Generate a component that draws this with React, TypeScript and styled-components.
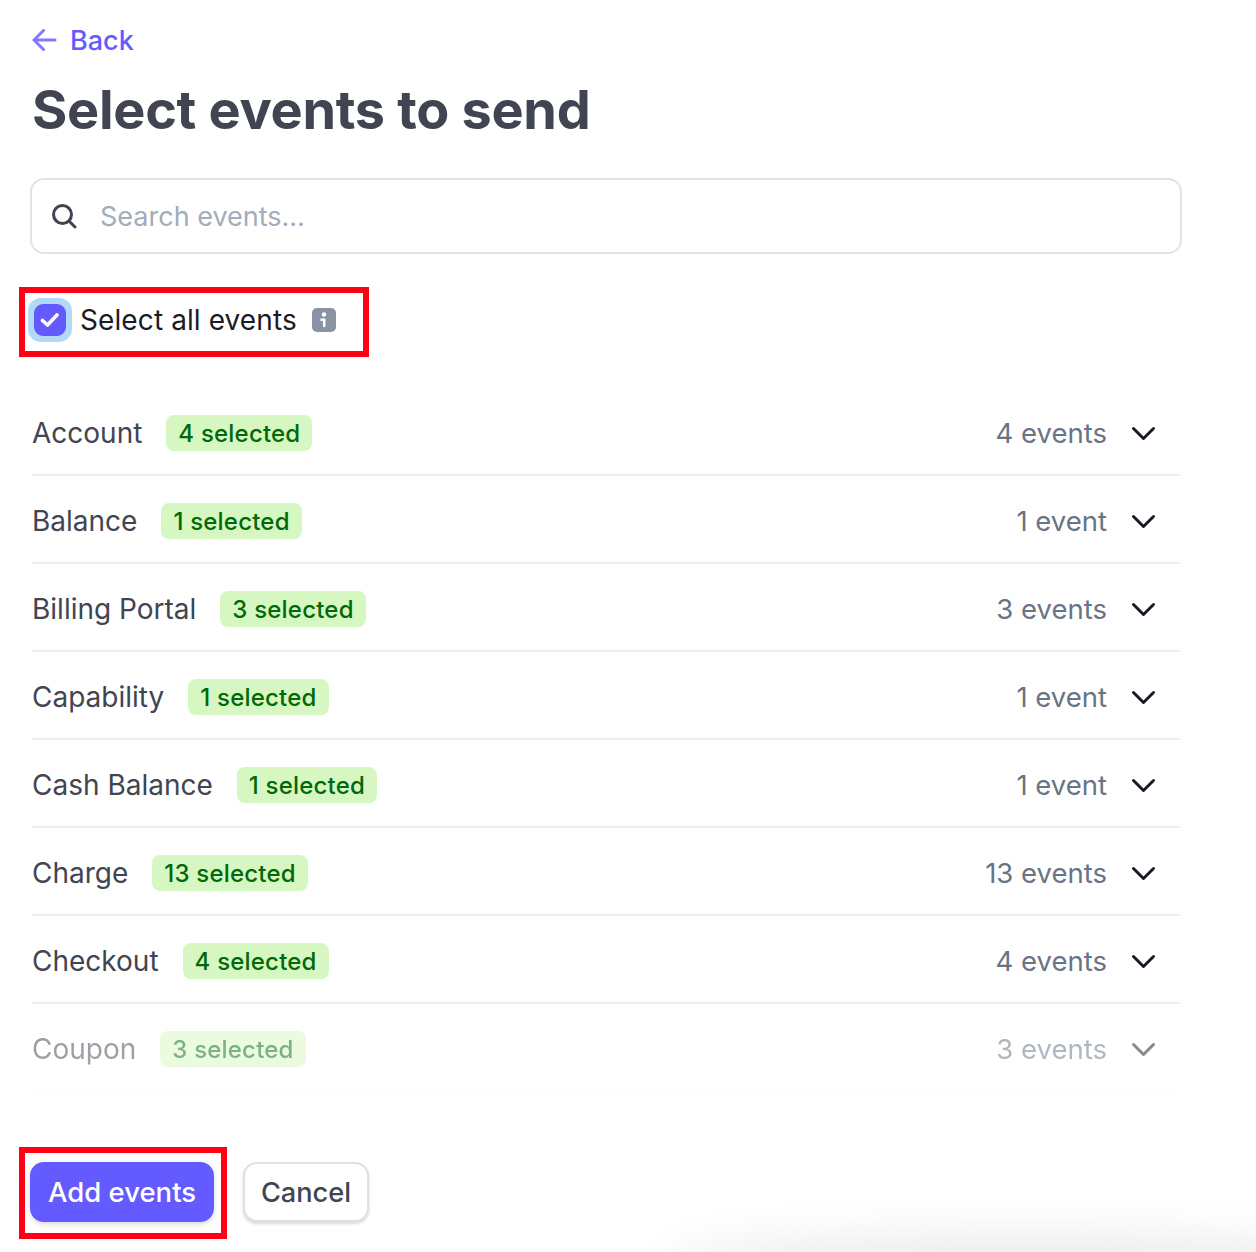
import styled, { createGlobalStyle } from "styled-components";

const GlobalStyle = createGlobalStyle`
  html, body {
    margin: 0;
    padding: 0;
    background: #fff;
  }
  * {
    box-sizing: border-box;
  }
`;

const StyledPage = styled.main`
  position: relative;
  width: 1256px;
  height: 1252px;
  overflow: hidden;
  padding: 20px 75px 0 32px;
  font-family: Inter, "Noto Sans", sans-serif;
  color: #414552;

  &::after {
    content: "";
    position: absolute;
    left: 680px;
    right: -120px;
    bottom: -30px;
    height: 30px;
    border-radius: 50%;
    box-shadow: 0 0 50px 14px rgba(0, 0, 0, 0.09);
  }
`;

const StyledBackLink = styled.a`
  display: flex;
  align-items: center;
  gap: 13px;
  height: 40px;
  font-size: 27px;
  font-weight: 500;
  color: #635bff;
`;

const StyledTitle = styled.h1`
  margin: 15px 0 0;
  font-size: 54px;
  line-height: 70px;
  font-weight: 700;
  letter-spacing: -0.3px;
  color: #414552;
`;

const StyledSearch = styled.div`
  display: flex;
  align-items: center;
  gap: 23px;
  height: 76px;
  margin: 33px 0 0 -2px;
  width: 1152px;
  padding-left: 19px;
  border: 2px solid #e3e3e6;
  border-radius: 14px;
  font-size: 27px;
  color: #a3acba;
`;

const StyledMarked = styled.div`
  position: relative;

  &::after {
    content: "";
    position: absolute;
    border: 6px solid #ff0015;
    pointer-events: none;
  }
`;

const StyledSelectAll = styled(StyledMarked)`
  display: inline-flex;
  align-items: center;
  gap: 8px;
  height: 44px;
  margin: 44px 0 0 -4px;
  font-size: 28px;
  letter-spacing: 0.1px;
  color: #1a1b25;

  &::after {
    inset: -11px -33px -15px -9px;
  }
`;

const StyledCheckbox = styled.span`
  display: flex;
  align-items: center;
  justify-content: center;
  width: 44px;
  height: 44px;
  border-radius: 13px;
  background: #b3d9f9;
`;

const StyledCheckboxFace = styled.span`
  display: flex;
  align-items: center;
  justify-content: center;
  width: 32px;
  height: 32px;
  border-radius: 9px;
  background: #635bff;
`;

const StyledInfo = styled.svg`
  margin-left: 7px;
`;

const StyledList = styled.ul`
  list-style: none;
  width: 1148px;
  margin: 46px 0 0;
  padding: 0;
`;

const StyledRow = styled.li<{ $faded?: boolean }>`
  display: flex;
  align-items: center;
  height: 88px;
  padding: 4px 25px 0 0;
  border-bottom: 2px solid #eeedf3;
  ${({ $faded }) =>
    $faded
      ? "mask-image: linear-gradient(rgba(0,0,0,0.55), rgba(0,0,0,0.5) 70%, rgba(0,0,0,0.1));"
      : ""}
`;

const StyledRowName = styled.span`
  font-size: 28px;
  color: #414552;
`;

const StyledBadge = styled.span`
  display: flex;
  align-items: center;
  height: 36px;
  margin-left: 24px;
  padding: 0 12px;
  border-radius: 8px;
  background: #d7f7c2;
  color: #006908;
  font-size: 24px;
  font-weight: 500;
  letter-spacing: 0.2px;
`;

const StyledCount = styled.span`
  margin-left: auto;
  margin-right: 25px;
  font-size: 27.5px;
  color: #687385;
`;

const StyledActions = styled.div`
  display: flex;
  align-items: center;
  gap: 29px;
  margin-top: 70px;
  margin-left: -2px;
`;

const StyledAddWrap = styled(StyledMarked)`
  &::after {
    inset: -15px -13px -17px -11px;
  }
`;

const StyledPrimaryButton = styled.button`
  display: block;
  width: 184px;
  height: 60px;
  padding: 0;
  border: none;
  border-radius: 14px;
  background: #635bff;
  box-shadow: 0 2px 5px rgba(60, 66, 87, 0.2);
  color: #fff;
  font-family: inherit;
  font-size: 27.5px;
  font-weight: 500;
`;

const StyledSecondaryButton = styled.button`
  width: 126px;
  height: 60px;
  padding: 0;
  border: 2px solid #e0e0e3;
  border-radius: 14px;
  background: #fff;
  box-shadow: 0 2px 3px rgba(60, 66, 87, 0.2);
  color: #414552;
  font-family: inherit;
  font-size: 27.2px;
  font-weight: 500;
`;

const groups = [
  { name: "Account", count: 4 },
  { name: "Balance", count: 1 },
  { name: "Billing Portal", count: 3 },
  { name: "Capability", count: 1 },
  { name: "Cash Balance", count: 1 },
  { name: "Charge", count: 13 },
  { name: "Checkout", count: 4 },
  { name: "Coupon", count: 3 },
];

export default function App() {
  return (
    <StyledPage>
      <GlobalStyle />
      <StyledBackLink>
        <svg width="25" height="26" viewBox="0 0 25 26" fill="none" stroke="#8179fb" strokeWidth="3" strokeLinecap="round" strokeLinejoin="round">
          <path d="M2 13h21M11.5 3.5L2 13l9.5 9.5" />
        </svg>
        Back
      </StyledBackLink>
      <StyledTitle>Select events to send</StyledTitle>

      <StyledSearch>
        <svg width="26" height="26" viewBox="0 0 26 26" fill="none" stroke="#414552" strokeWidth="3" strokeLinecap="round">
          <circle cx="11.5" cy="11.5" r="9" />
          <path d="M18.5 18.5L24 24" />
        </svg>
        Search events...
      </StyledSearch>

      <StyledSelectAll>
        <StyledCheckbox>
          <StyledCheckboxFace>
            <svg width="20" height="20" viewBox="0 0 20 20" fill="none" stroke="#fff" strokeWidth="3.6" strokeLinecap="round" strokeLinejoin="round">
              <path d="M2.5 10.5l5 4.5 9.5-10" />
            </svg>
          </StyledCheckboxFace>
        </StyledCheckbox>
        Select all events
        <StyledInfo width="24" height="24" viewBox="0 0 24 24">
          <rect width="24" height="24" rx="5" fill="#8a93a3" />
          <circle cx="12" cy="6.5" r="2.2" fill="#fff" />
          <path d="M8.5 10.5H13.5V19H11V13H8.5z" fill="#fff" />
        </StyledInfo>
      </StyledSelectAll>

      <StyledList>
        {groups.map((group, i) => (
          <StyledRow key={group.name} $faded={i === groups.length - 1}>
            <StyledRowName>{group.name}</StyledRowName>
            <StyledBadge>{group.count} selected</StyledBadge>
            <StyledCount>
              {group.count} {group.count === 1 ? "event" : "events"}
            </StyledCount>
            <svg width="23" height="16" viewBox="0 0 23 16" fill="none" stroke="#1a1b25" strokeWidth="3" strokeLinecap="round" strokeLinejoin="round">
              <path d="M1.5 3.5L11.5 13.5 21.5 3.5" />
            </svg>
          </StyledRow>
        ))}
      </StyledList>

      <StyledActions>
        <StyledAddWrap>
          <StyledPrimaryButton>Add events</StyledPrimaryButton>
        </StyledAddWrap>
        <StyledSecondaryButton>Cancel</StyledSecondaryButton>
      </StyledActions>
    </StyledPage>
  );
}
